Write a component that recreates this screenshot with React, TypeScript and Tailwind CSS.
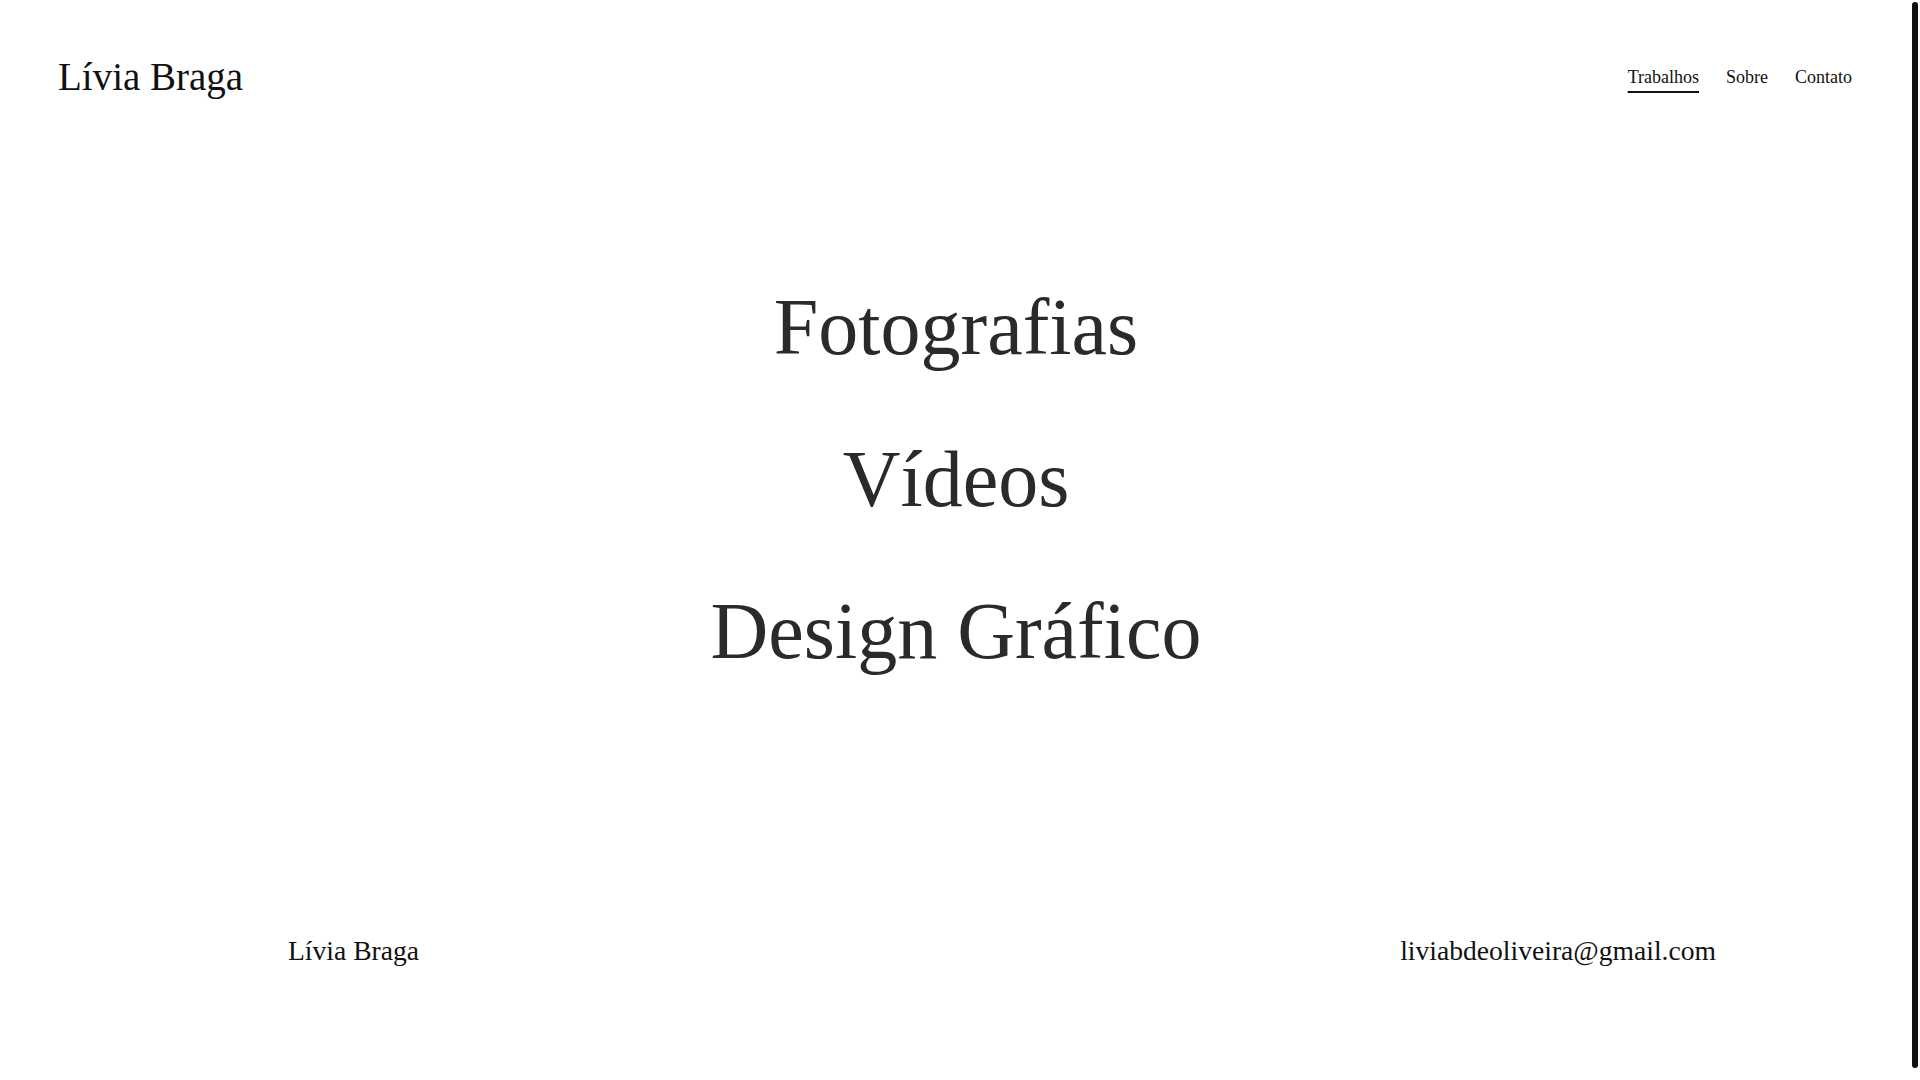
const serif = "font-['Liberation_Serif','Times_New_Roman',serif]";

const links = [
  { label: "Trabalhos", active: true },
  { label: "Sobre", active: false },
  { label: "Contato", active: false },
];

const works = ["Fotografias", "Vídeos", "Design Gráfico"];

export default function App() {
  return (
    <div className={`h-screen w-full flex overflow-hidden bg-white ${serif}`}>
      <div className="flex-1 flex flex-col min-w-0">
        {/* Header */}
        <header className="flex items-center justify-between pt-[54px] pl-[58px] pr-[60px]">
          <a href="#" className="text-[39px] leading-[46px] text-[#111]">
            Lívia Braga
          </a>
          <nav className="flex items-center gap-[27px]">
            {links.map((l) => (
              <a
                key={l.label}
                href="#"
                className={
                  l.active
                    ? "text-[18px] leading-[21px] text-[#111] underline decoration-2 underline-offset-8"
                    : "text-[18px] leading-[21px] text-[#111]"
                }
              >
                {l.label}
              </a>
            ))}
          </nav>
        </header>

        {/* Works list */}
        <main className="mt-[181px] flex flex-col items-center gap-[60px]">
          {works.map((w) => (
            <a key={w} href="#" className="text-[80px] leading-[92px] text-[#2a2a2a]">
              {w}
            </a>
          ))}
        </main>

        {/* Footer */}
        <footer className="mt-[258px] flex items-center justify-between pl-[288px] pr-[196px] text-[27.6px] leading-[32px] text-[#111]">
          <span>Lívia Braga</span>
          <span>liviabdeoliveira@gmail.com</span>
        </footer>
      </div>

      {/* Right edge bar */}
      <div className="w-[6px] mt-[2px] mb-[12px] mr-[2px] rounded-full bg-[#111]" />
    </div>
  );
}
